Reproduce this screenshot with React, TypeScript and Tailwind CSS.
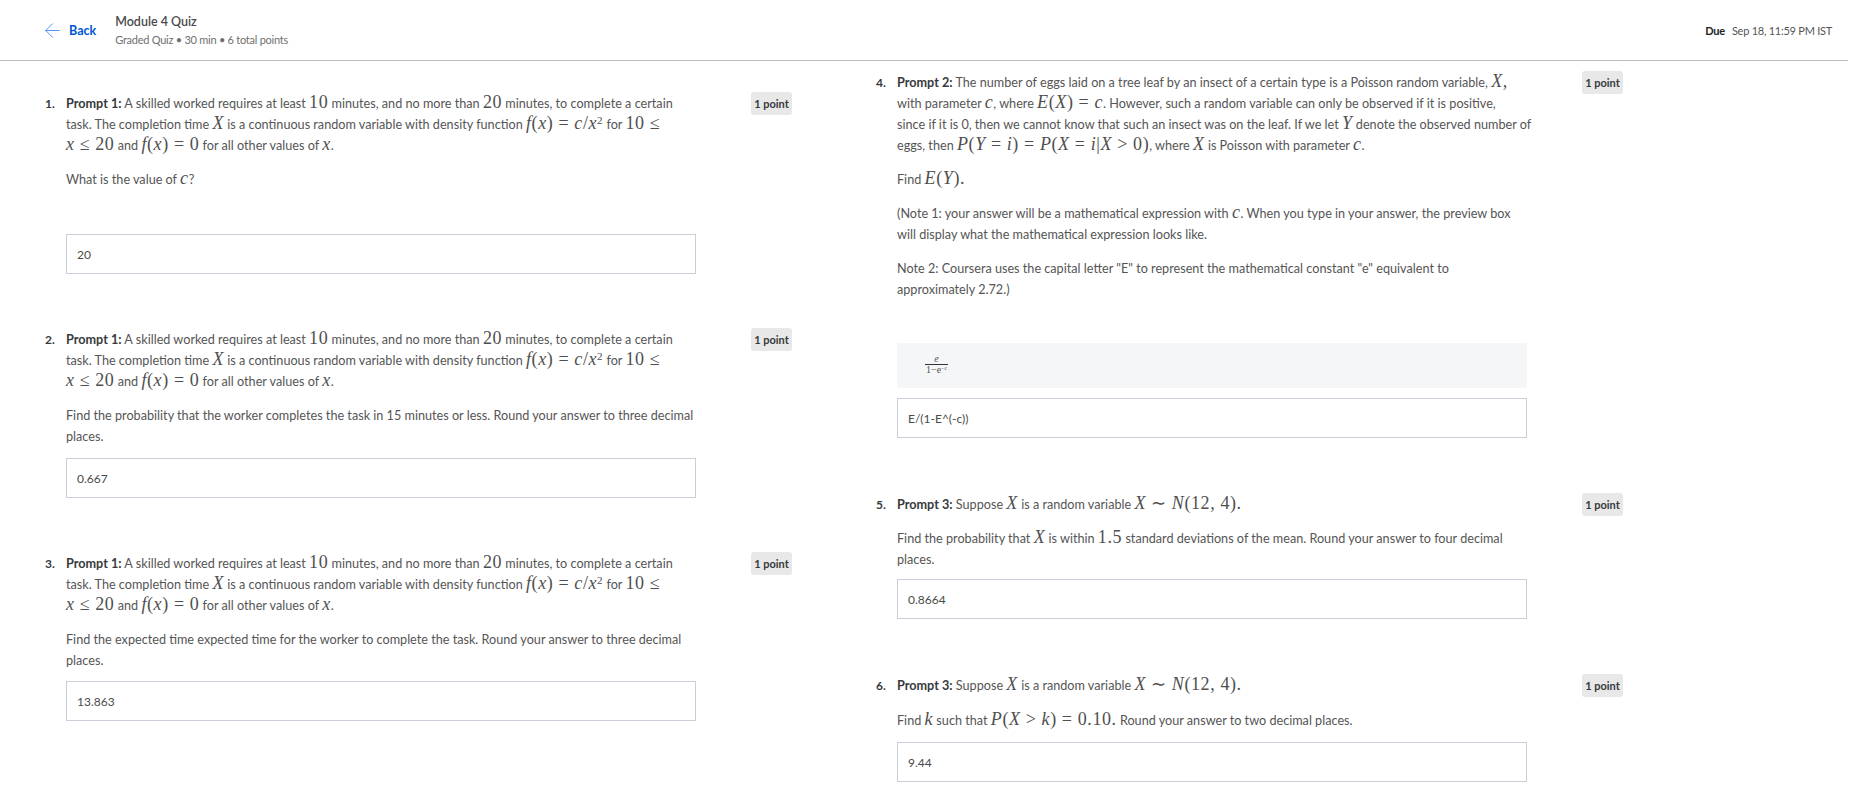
import type { ReactNode } from 'react'
import { ArrowLeft } from 'lucide-react'

// inline math, set a bit larger than the body text like KaTeX does
function M({ children }: { children: ReactNode }) {
  return (
    <span className="font-['Liberation_Serif',serif] text-[18px] leading-[0] tracking-[0.6px] text-[#4f4f4f]">
      {children}
    </span>
  )
}

function I({ children }: { children: ReactNode }) {
  return <i className="italic">{children}</i>
}

function Answer({ value }: { value: string }) {
  return (
    <div className="flex items-center h-10 w-[630px] border border-[#c9ced8] bg-white pl-[10px] text-[12px] text-[#4a4a4a]">
      {value}
    </div>
  )
}

interface QuestionProps {
  num: number
  first: ReactNode
  children: ReactNode
  answer: string
  answerGap?: string
  paraGap?: string
  preview?: boolean
}

function Question({ num, first, children, answer, answerGap = 'mt-[11px]', paraGap = 'gap-[13px]', preview }: QuestionProps) {
  return (
    <div className="flex items-start">
      <div className="w-[21px] shrink-0 leading-[21px] font-bold text-[12px] text-[#373a3c]">{num}.</div>
      <div className="w-[630px] shrink-0">
        <div className={`flex flex-col ${paraGap}`}>
          <p>{first}</p>
          {children}
        </div>
        {preview && (
          <div className="mt-[43px] h-[45px] w-[630px] bg-[#f5f6f7] flex items-center pl-[28px]">
            <div className="flex flex-col items-center font-['Liberation_Serif',serif] text-[10px] leading-[10px] text-[#555] -mt-[2px]">
              <i className="px-[1px]">e</i>
              <span className="border-t border-[#333] px-[1px]">1−e<sup className="text-[6px] leading-none">−c</sup></span>
            </div>
          </div>
        )}
        <div className={preview ? 'mt-[10px]' : answerGap}>
          <Answer value={answer} />
        </div>
      </div>
      <div className="ml-[55px] mt-[-1px] w-[41px] h-[23px] shrink-0 rounded-[3px] bg-[#e8e8e8] flex items-center justify-center text-[11px] font-bold text-[#373a3c]">
        1 point
      </div>
    </div>
  )
}

function Prompt1() {
  return (
    <>
      <b className="font-bold text-[#373a3c]">Prompt 1:</b> A skilled worked requires at least <M>10</M> minutes, and no more than <M>20</M> minutes, to complete a certain
      task. The completion time <M><I>X</I></M> is a continuous random variable with density function <M><I>f</I>(<I>x</I>) = <I>c</I>/<I>x</I><sup className="text-[11px] leading-[0]">2</sup></M> for <M>10 ≤</M>
      <br />
      <M><I>x</I> ≤ 20</M> and <M><I>f</I>(<I>x</I>) = 0</M> for all other values of <M><I>x</I></M>.
    </>
  )
}

export default function App() {
  return (
    <div className="min-h-[802px] w-[1864px] bg-white font-['Lato','Noto_Sans',sans-serif] text-[12.65px] leading-[21px] text-[#555]">
      <header className="flex items-center justify-between h-[61px] w-[1848px] border-b border-[#bdbdbd] pl-[41px] pr-[16px]">
        <div className="flex items-center">
          <ArrowLeft className="w-[23px] h-[23px] text-[#4a90ef]" strokeWidth={1} />
          <span className="ml-[5px] text-[12.5px] font-bold text-[#0056d2]">Back</span>
          <div className="ml-[19px] pt-[1px]">
            <div className="text-[12.5px] leading-[18px] font-semibold text-[#4a4a4a]">Module 4 Quiz</div>
            <div className="text-[11px] leading-[18px] tracking-[-0.25px] text-[#6f6f6f]">Graded Quiz • 30 min • 6 total points</div>
          </div>
        </div>
        <div className="text-[11px] tracking-[-0.25px] text-[#555]">
          <b className="font-bold text-[#222]">Due</b>
          <span className="ml-[7px]">Sep 18, 11:59 PM IST</span>
        </div>
      </header>

      <main className="flex items-start">
        {/* left column */}
        <div className="w-[876px] shrink-0 pl-[45px] pt-[32px] flex flex-col gap-[55px]">
          <Question num={1} first={<Prompt1 />} answer="20" answerGap="mt-[44px]">
            <p>What is the value of <M><I>c</I></M>?</p>
          </Question>
          <Question num={2} first={<Prompt1 />} answer="0.667">
            <p>Find the probability that the worker completes the task in 15 minutes or less. Round your answer to three decimal places.</p>
          </Question>
          <Question num={3} first={<Prompt1 />} answer="13.863" answerGap="mt-[10px]">
            <p>Find the expected time expected time for the worker to complete the task. Round your answer to three decimal places.</p>
          </Question>
        </div>

        {/* right column */}
        <div className="pt-[11px] flex flex-col gap-[56px]">
          <Question
            num={4}
            preview
            answer="E/(1-E^(-c))"
            first={
              <span className="block -mr-[10px]">
                <b className="font-bold text-[#373a3c]">Prompt 2:</b> The number of eggs laid on a tree leaf by an insect of a certain type is a Poisson random variable, <M><I>X</I>,</M>
                <br />
                with parameter <M><I>c</I></M>, where <M><I>E</I>(<I>X</I>) = <I>c</I></M>. However, such a random variable can only be observed if it is positive,
                <br />
                since if it is 0, then we cannot know that such an insect was on the leaf. If we let <M><I>Y</I></M> denote the observed number of
                <br />
                eggs, then <M><I>P</I>(<I>Y</I> = <I>i</I>) = <I>P</I>(<I>X</I> = <I>i</I>|<I>X</I> &gt; 0)</M>, where <M><I>X</I></M> is Poisson with parameter <M><I>c</I></M>.
              </span>
            }
          >
            <p>Find <M><I>E</I>(<I>Y</I>).</M></p>
            <p>(Note 1: your answer will be a mathematical expression with <M><I>c</I></M>. When you type in your answer, the preview box will display what the mathematical expression looks like.</p>
            <p>Note 2: Coursera uses the capital letter "E" to represent the mathematical constant "e" equivalent to approximately 2.72.)</p>
          </Question>
          <Question
            num={5}
            answer="0.8664"
            answerGap="mt-[9px]"
            first={
              <>
                <b className="font-bold text-[#373a3c]">Prompt 3:</b> Suppose <M><I>X</I></M> is a random variable <M><I>X</I> ∼ <I>N</I>(12, 4).</M>
              </>
            }
          >
            <p>Find the probability that <M><I>X</I></M> is within <M>1.5</M> standard deviations of the mean. Round your answer to four decimal places.</p>
          </Question>
          <Question
            num={6}
            answer="9.44"
            paraGap="gap-[14px]"
            first={
              <>
                <b className="font-bold text-[#373a3c]">Prompt 3:</b> Suppose <M><I>X</I></M> is a random variable <M><I>X</I> ∼ <I>N</I>(12, 4).</M>
              </>
            }
          >
            <p>Find <M><I>k</I></M> such that <M><I>P</I>(<I>X</I> &gt; <I>k</I>) = 0.10.</M> Round your answer to two decimal places.</p>
          </Question>
        </div>
      </main>
    </div>
  )
}
